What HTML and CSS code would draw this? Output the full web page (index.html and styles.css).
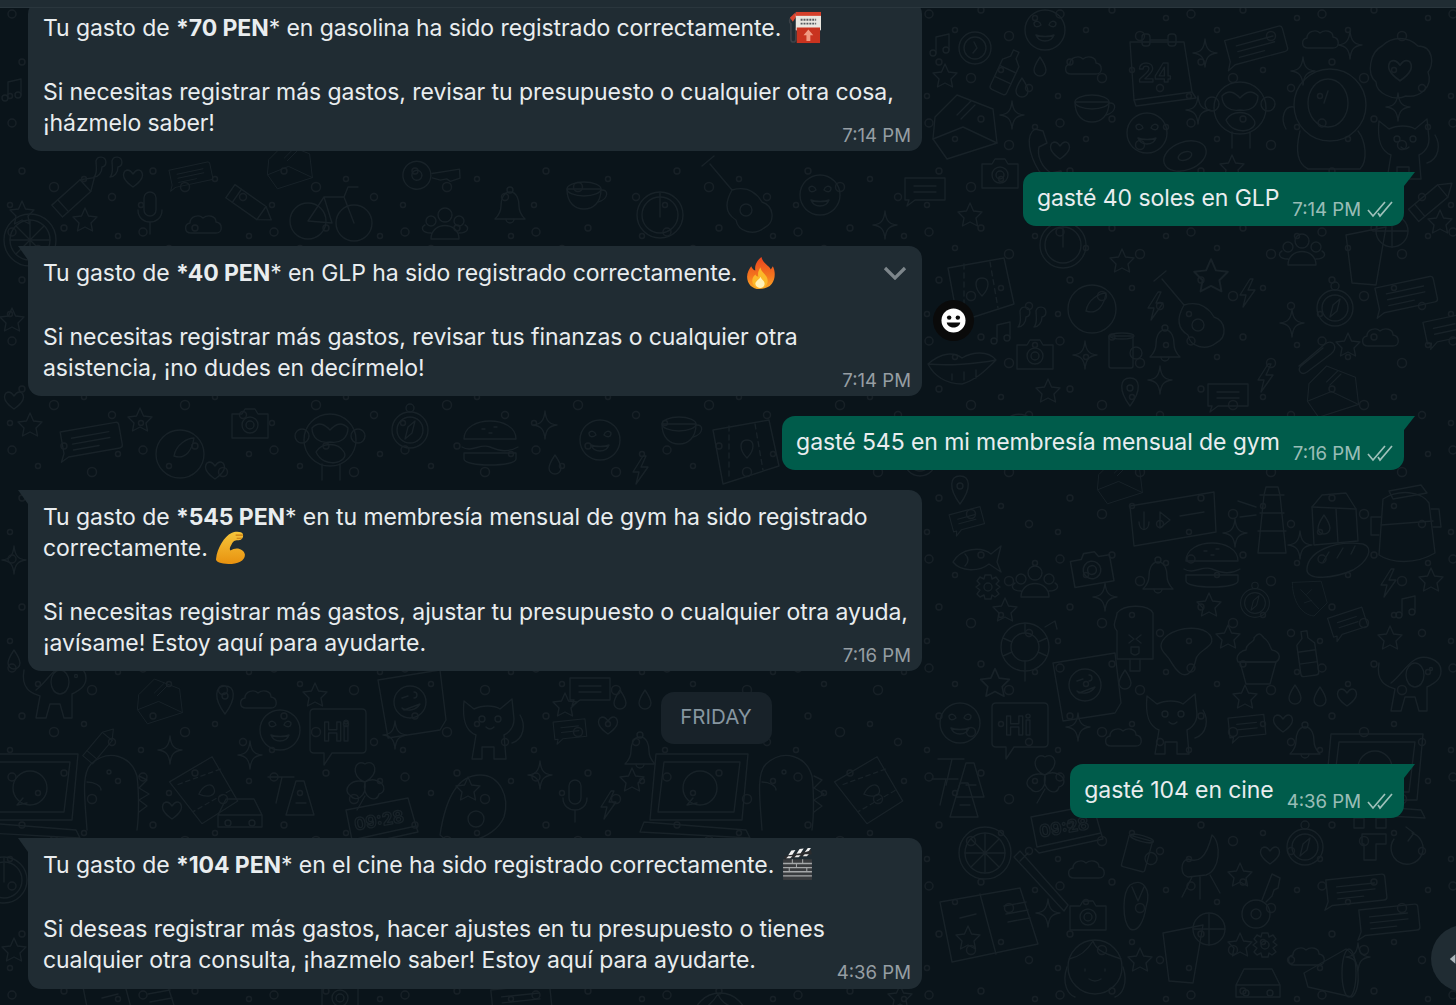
FILE: index.html
```html
<!DOCTYPE html>
<html lang="es">
<head>
<meta charset="utf-8">
<title>Chat</title>
<link rel="stylesheet" href="styles.css">
</head>
<body>
<div class="app">
  <svg class="doodles" width="1456" height="1005" viewBox="0 0 1456 1005" aria-hidden="true">
    <defs>
      <pattern id="dots" width="131" height="109" patternUnits="userSpaceOnUse">
        <circle cx="12" cy="14" r="4"/><circle cx="38" cy="30" r="2.5"/><circle cx="64" cy="10" r="3"/><circle cx="92" cy="36" r="4.5"/><circle cx="118" cy="18" r="2.5"/><circle cx="22" cy="62" r="3"/><circle cx="54" cy="78" r="4.5"/><circle cx="84" cy="70" r="2.5"/><circle cx="112" cy="88" r="3.5"/><circle cx="10" cy="96" r="2.5"/>
      </pattern>
      <path id="star" d="M0-12 3.5-4 12-3 6 3 7.5 11 0 7-7.5 11-6 3-12-3-3.5-4Z"/>
      <path id="sparkle" d="M0-14C1-4 4-1 12 0 4 1 1 4 0 14-1 4-4 1-12 0-4-1-1-4 0-14Z"/>
      <path id="heart" d="M0 9C-10 2-11-3-8-7-5-9-2-7 0-4 2-7 5-9 8-7 11-3 10 2 0 9Z"/>
      <path id="drop" d="M0-10C4-4 6-1 6 3A6 6 0 0 1-6 3C-6-1-4-4 0-10Z"/>
      <path id="cloud" d="M-14 8C-21 8-21-1-15-2-15-9-6-11-2-7 3-11 11-9 11-3 18-2 18 8 11 8Z"/>
      <path id="bolt" d="M3-14-7 2-1 2-4 14 8-3 1-3 6-14Z"/>
      <g id="note"><path d="M-6 8V-8L7-11V5"/><circle cx="-9" cy="8" r="3"/><circle cx="4" cy="5" r="3"/></g>
      <g id="chat"><path d="M-28-13H28Q31-13 31-10V10Q31 13 28 13H-24L-32 17-28 9Z"/><path d="M-18-5H20M-18 1H20M-18 7H8"/></g>
      <g id="smchat"><path d="M-20-12H20V10H-10L-18 16-16 10H-20Z"/><path d="M-11-4H11M-11 2H11"/></g>
      <g id="love"><circle r="20"/><path d="M-11-7C-9-10-5-9-4-5-8-2-11-3-11-7ZM11-7C9-10 5-9 4-5 8-2 11-3 11-7ZM-9 5C-5 7 5 7 9 5 6 13-6 13-9 5Z"/></g>
      <g id="clock"><circle r="16"/><circle r="11"/><path d="M-1-6 2 0-2 5"/></g>
      <g id="bottle"><path d="M-3-22H3V-15L9-9V20Q9 23 6 23H-6Q-9 23-9 20V-9L-3-15Z"/><path d="M-9-2H9M-9 10H9"/></g>
      <g id="envelope"><path d="M-30-8-8-30 28-16 32 18-18 34-32 14Z"/><path d="M-32 14-2 2 32 18M-8-10 6-24M-4-6 10-20"/></g>
      <g id="calendar"><path d="M-28-26H26L34 24-24 32Z"/><path d="M-24 32-22 38 38 30 34 24"/><rect x="-16" y="-34" width="8" height="12" rx="3"/><rect x="10" y="-34" width="8" height="12" rx="3"/><path d="M-8-28H10"/><text x="-20" y="14" class="dtext">24</text></g>
      <g id="camera"><path d="M-18-11H-8L-5-16H5L8-11H18V13H-18Z"/><circle r="8"/><circle r="4"/></g>
      <g id="mug"><path d="M-13-15H11V15Q11 17 9 17H-11Q-13 17-13 15Z"/><ellipse cy="-15" rx="12" ry="3"/><circle cx="14" cy="2" r="6"/></g>
      <g id="cup"><path d="M-18-6H16C16 8 8 14-1 14S-18 8-18-6Z"/><ellipse cx="-1" cy="-6" rx="17" ry="7"/><path d="M16-5C24-6 24 4 13 7"/></g>
      <g id="bell"><path d="M0-18C7-18 9-10 9-4 9 2 12 6 15 9H-15C-12 6-9 2-9-4-9-10-7-18 0-18Z"/><circle cy="-20" r="3"/><path d="M-4 9A4 4 0 0 0 4 9"/></g>
      <g id="wheel"><circle r="23"/><circle r="18"/><path d="M0-23V2"/></g>
      <g id="bike"><circle cx="-22" cy="6" r="18"/><circle cx="24" cy="8" r="18"/><path d="M-22 6-6-18 14-18 24 8M-6-18 2 8-22 6M14-18 18-28H28"/></g>
      <g id="pencil"><path d="M-24-8 14-8 26 0 14 8-24 8Z"/><path d="M-16-8V8M14-8V8"/></g>
      <g id="mic"><rect x="-6" y="-20" width="12" height="24" rx="6"/><path d="M-12-2C-12 14 12 14 12-2M0 10V22"/></g>
      <g id="compass"><circle r="18"/><circle r="13"/><circle cy="-22" r="4"/><path d="M5-9 2 3-5 9-2-3Z"/></g>
      <g id="guitar"><path d="M-30-36-8-10M-38-34-26-44M-8-10C-16 4-14 14-4 20-2 32 14 36 24 28 36 22 34 6 22 2 16-8 6-14-8-10Z"/><circle cx="6" cy="10" r="6"/></g>
      <g id="burger"><path d="M-26-6C-26-30 26-30 26-6Z"/><path d="M-28 2C-18 8-10-2 0 2S18 8 28 2M-26 8H26V14C26 22-26 22-26 14Z"/><path d="M-8-16H-5M4-18H7M-1-12H2"/></g>
      <g id="fish"><path d="M-22 4C-14-10 6-12 16-4L26-12 22 4 26 14 14 6C4 14-14 14-22 4Z"/><path d="M-10-4C-6 0-6 4-10 8"/></g>
      <g id="people"><circle cy="-10" r="7"/><circle cx="-14" cy="-4" r="5"/><circle cx="14" cy="-4" r="5"/><path d="M-14 14C-14-4 14-4 14 14ZM-14 8C-24 8-24 2-20 0M14 8C24 8 24 2 20 0"/></g>
      <g id="gear"><circle r="4"/><path d="M-3-12H3L4-8 8-10 11-6 8-3 12 0 8 3 11 7 7 10 4 8 3 12H-3L-4 8-8 10-11 7-8 3-12 0-8-3-11-6-8-10-4-8Z"/></g>
      <g id="turtle"><circle r="14"/><circle r="24"/><path d="M0-24V-14M0 14V24M-22-9-13-5M22-9 13-5M-22 9-13 5M22 9 13 5"/><path d="M20-20 30-26 32-18M0 24V34"/></g>
      <g id="pop"><path d="M-18-24C-10-34 14-32 18-24V22H-18V-6C-24-12-18-18-18-24Z"/><path d="M-5 22V34H5V22M-6-2-1 2-6 6M6-2 1 2 6 6M-4 10H4V16Q0 20-4 16Z"/></g>
      <g id="blob"><path d="M-20-18C-8-26 14-28 22-18 30-6 10-4 8 6S0 26-8 20-16 8-22 2-30-10-20-18Z"/></g>
      <g id="cupcake"><path d="M-18 2H18L12 24H-12Z"/><path d="M-20 2C-24-6-14-10-12-10-12-18-2-18-4-22 2-30 4-24 6-22 12-18 12-12 14-10 24-8 22 0 18 2Z"/></g>
      <g id="dog"><path d="M-26-20C-30 2-14 4-10 6L-14 28H-4L0 14H10L14 28H22V4C30 0 36-4 36-12 36-24 18-30 8-22 0-16-6-6-14 0"/><ellipse cx="10" cy="-8" rx="9" ry="12"/><circle cx="26" cy="-14" r="1.5"/></g>
      <g id="wink"><path d="M-32-20 30-30 36 20 30 30-22 38Z"/><circle cy="2" r="16"/><path d="M-8-2-2-4M4-8A3 3 0 1 1 4-2M-8 8C-2 12 6 10 10 4L-6 10Z"/></g>
      <g id="hi"><path d="M-24-24H24Q28-24 28-20V16Q28 20 24 20H-6L-14 32-14 20H-24Q-28 20-28 16V-20Q-28-24-24-24Z"/><text x="-15" y="8" class="dtext">Hi</text></g>
      <g id="cat"><path d="M-26-24-16-16C-8-20 4-20 10-16L22-26 24-6C24 6 14 10 14 10L16 34H4V22H-8V34H-18L-14 10C-24 6-28-4-26-24Z"/><circle cx="-8" cy="-6" r="3"/><circle cx="8" cy="-6" r="3"/><path d="M-4 2Q0 6 4 2"/><path d="M22 18C34 14 36 0 30-10"/></g>
      <g id="laptop"><path d="M-44-36H48L42 30H-50Z"/><path d="M-36-28H40L34 22H-42Z"/><path d="M-56 32 46 40 50 48-60 42Z"/><circle cy="-2" r="17"/><path d="M-7 8-13 15-3 13"/></g>
      <g id="clover"><path d="M0 2C-16-4-10-22 0-16 10-22 16-6 0 2ZM0 2C14-6 26 10 14 14 12 24-4 18 0 2ZM0 2C-14-2-24 10-14 16-10 22 2 18 0 2ZM0 16-8 30"/></g>
      <g id="letters"><path d="M-12 20-2-14H6L16 20ZM-2 8H8M-30-18H-4M-16-18-22 8"/></g>
      <g id="digit"><path d="M-34-10 28-22 36 6-28 20Z"/><path d="M-30 22-26 26 38 12 36 6"/><text x="-26" y="6" class="dtext dsmall" transform="rotate(-10)">09:28</text></g>
      <g id="citrus"><circle r="26"/><circle r="20"/><path d="M0-20V20M-20 0H20M-14-14 14 14M-14 14 14-14"/></g>
      <g id="chair"><path d="M-14-8C-4-4 4-8 10-32 20-24 18 4 4 8L-14 10C-22 8-22-6-14-8ZM-10 10-20 30M8 8 18 26M-2 10V32"/></g>
      <g id="puzzle"><path d="M-18-22H-8V-12H-18ZM4-22H14V-12H4ZM-10-6H14V4H4V20H-8V4H-10Z"/></g>
      <g id="refresh"><path d="M-14-8A16 16 0 1 0 4-14M-2-20 6-14 0-6"/></g>
      <g id="brush"><path d="M-28-26-22-32 26 22 22 28ZM-22-22-14-30"/></g>
      <g id="book"><path d="M-48-18 32-32 50 24-36 42Z"/><path d="M-8-26 8 34M-28-2-12-6M16-14 38-18M18-6 40-10M20 2 42-2"/><use href="#star" x="-20" y="18"/></g>
      <g id="flip"><path d="M-8-22C4-30 14-18 8 0 6 14 0 26-8 22-16 14-16-14-8-22ZM-6-20 0-6 6-20"/></g>
      <g id="keyd"><circle cx="-2" cy="14" r="14"/><circle cx="-2" cy="14" r="5"/><path d="M4 0 14-26 22-22 20-12 16-10 14-4 8 2"/></g>
      <g id="girl"><circle r="27"/><path d="M-26-8C-16-10-8-16-2-26 2-14 16-12 26-8M-10 2V4M10 2V4M-6 12Q0 16 6 12"/><path d="M-28 0C-34 18-26 28-20 30M28 0C34 18 26 28 20 30"/></g>
      <g id="drink"><path d="M-22-20 18-28 8 30-16 28Z"/><circle cx="24" cy="-24" r="16"/><path d="M24-40V-8M8-24H40"/></g>
      <g id="megaphone"><path d="M-28-4 14-28C28-20 30 12 20 20L-24 10Z"/><ellipse cx="17" cy="-4" rx="7" ry="24"/></g>
      <g id="car"><path d="M-22 12V0L-14-16H14L22 0V12ZM-22 0H22"/><circle cx="-12" cy="8" r="3"/><circle cx="12" cy="8" r="3"/></g>
      <g id="audio"><path d="M-42-14 42-28 44 12-38 26Z"/><path d="M-28-8V8M-33 2C-33 12-23 12-23 2M-12-8-12 8-2 0ZM8-4 32-8"/></g>
      <g id="tower"><path d="M-8-28H8L14 30H-14ZM-12-28H12M-12-10H12M-14 8H14"/><path d="M-8-28-6-36H6L8-28"/><path d="M-16-16-34-22M-16-8-32-6"/></g>
      <g id="milk"><path d="M-20-10-10-22 14-24 24-8 26 24-18 28Z"/><path d="M-20-10 24-8M4-8 6 26"/><use href="#drop" x="-8" y="8"/></g>
      <g id="pack"><path d="M-22-28C-6-38 16-36 24-24L30 26C10 38-14 36-26 28Z"/><path d="M-24-2 28-6M-26 8H-34V-10H-24M28 0H36L34-18H26"/><path d="M-16-36 16-42 22-34-12-28Z"/></g>
      <g id="bread"><path d="M-30 8C-28-8-4-20 26-16 38-12 30 2 16 10-2 18-32 22-30 8Z"/><path d="M-14 2-8-8M0-2 6-12M14-6 18-14"/></g>
      <g id="phone"><path d="M-8-26C-18-20-14 0-4 16 4 26 14 30 22 26L18 16 8 18C-2 12-6 0-4-8L4-12 0-24Z"/></g>
      <g id="monkey"><circle r="26"/><circle cx="-28" cy="-4" r="7"/><circle cx="28" cy="-4" r="7"/><path d="M-18-12C-10-20-4-14 0-10 4-14 10-20 18-12 18-2 10 4 0 2-10 4-18-2-18-12ZM-14 12C-8 2 8 2 14 12S-6 30-14 12ZM-8 24V40M10 24V40"/></g>
      <g id="astro"><circle r="36"/><ellipse cx="-2" cy="-2" rx="20" ry="24"/><path d="M-6-2-2-14M-36 2C-46 0-50 14-44 24M-30 26C-36 50-30 60-22 64H30C38 56 36 36 28 26"/></g>
      <g id="flower"><path d="M-18-24C-8-34 8-34 18-24 34-24 34-4 28 2 34 18 18 28 6 26-8 32-24 22-24 12-34 4-30-18-18-24Z"/><use href="#heart" transform="scale(1.2)"/></g>
      <g id="donut"><ellipse rx="22" ry="14" transform="rotate(-20)"/><ellipse rx="7" ry="4" transform="rotate(-20)"/></g>
      <g id="map"><path d="M-32-20 24-30 34 16-22 34Z"/><path d="M-16-24V28M10-26 18 20" stroke-dasharray="5 4"/><path d="M2-10C-6-10-6 0 2 8 10 0 10-10 2-10Z"/></g>
      <g id="lips"><path d="M-34-6C-20-18-8-18 0-12 10-18 26-20 34-10 24 0 14 10 0 14-16 14-28 6-34-6ZM-34-6C-14-4 14-6 34-10M-10 4V10M2 2V10M14 0V8"/></g>
      <g id="quote"><path d="M-12-4A5 5 0 1 1-6 2C-6 8-10 12-14 12-10 8-12 2-12-4ZM4-4A5 5 0 1 1 10 2C10 8 6 12 2 12 6 8 4 2 4-4Z"/></g>
      <g id="leaf"><path d="M-26-26 22-28 32 8 10 30C-12 28-26 4-26-26ZM-12-14 18 18M-2-6 6-14M6 4-6 8"/></g>
      <g id="bird"><circle cy="4" r="24"/><path d="M-6 6C-4-6 8-12 14-12 12 0 6 10-6 6Z"/></g>
      <g id="dino"><path d="M-28 50C-30 20-34-6-24-16-6-32 16-24 22-4 24 12 24 36 22 50M24-4 32 0 24 8 34 14 24 20 32 26 24 32"/><circle cx="-6" cy="-8" r="2"/><path d="M-28 2C-20 2-14 6-14 10"/></g>
      <g id="clip"><path d="M-16 10 10-12C18-18 24-8 16-2L-8 16C-14 20-18 14-14 10L8-8"/></g>
      <g id="pin"><path d="M0-14C-10-14-12-2 0 14 12-2 10-14 0-14Z"/><circle cy="-4" r="3"/></g>
      <g id="controller"><path d="M-30 30C-24-10-10-30 10-30 30-30 40-8 34 12 24 36-16 44-30 30Z"/><use href="#star" x="-2" y="-16"/><circle cx="6" cy="14" r="8"/></g>
    </defs>
    <rect width="1456" height="1005" fill="url(#dots)"/>
    <g class="doodle">
      <use href="#love" x="1045" y="30"/><use href="#note" x="942" y="45"/><use href="#clock" x="975" y="48"/>
      <use href="#bottle" transform="translate(1007 71) rotate(25)"/><use href="#star" x="945" y="76"/>
      <use href="#calendar" x="1158" y="68"/><use href="#chat" transform="translate(1255 46) rotate(-15)"/>
      <use href="#sparkle" x="1205" y="53"/><use href="#sparkle" x="1350" y="45"/><use href="#sparkle" x="1303" y="71"/>
      <use href="#flower" x="1400" y="70"/><use href="#envelope" x="965" y="125"/><use href="#sparkle" x="1012" y="115"/>
      <use href="#cloud" x="1085" y="66"/><use href="#cloud" x="1322" y="40"/><use href="#cup" x="1093" y="108"/>
      <use href="#love" x="1147" y="133"/><use href="#monkey" x="1240" y="108"/><use href="#astro" x="1330" y="105"/>
      <use href="#phone" x="1043" y="155"/><use href="#heart" x="1060" y="150"/><use href="#donut" x="1185" y="156"/>
      <use href="#sparkle" x="1198" y="110"/><use href="#sparkle" x="1398" y="107"/><use href="#drop" x="1040" y="67"/><use href="#drop" x="1022" y="88"/>
      <use href="#cat" x="1405" y="145"/><use href="#star" x="1232" y="167"/>
      <use href="#wheel" x="1063" y="245"/><use href="#star" x="1122" y="261"/><use href="#star" transform="translate(1211 276) scale(1.4)"/>
      <use href="#guitar" x="1192" y="315"/><use href="#bolt" x="1247" y="293"/><use href="#bolt" x="1155" y="306"/><use href="#people" x="1302" y="251"/>
      <use href="#drink" x="1368" y="255"/><use href="#chat" transform="translate(1405 295) rotate(-12)"/><use href="#compass" x="1335" y="308"/>
      <use href="#sparkle" x="1292" y="323"/><use href="#map" x="980" y="288"/><use href="#quote" x="1032" y="315"/>
      <use href="#bird" x="1092" y="305"/><use href="#camera" x="1035" y="356"/><use href="#mug" x="1122" y="351"/>
      <use href="#bell" x="1165" y="348"/><use href="#sparkle" x="1085" y="355"/><use href="#clip" x="1315" y="356"/>
      <use href="#cloud" x="1382" y="338"/><use href="#star" x="1348" y="345"/><use href="#lips" x="962" y="370"/>
      <use href="#envelope" transform="translate(1333 390) scale(.8)"/><use href="#smchat" x="1228" y="396"/><use href="#sparkle" x="1160" y="380"/>
      <use href="#star" x="1048" y="391"/><use href="#bolt" x="1265" y="378"/><use href="#pin" x="1130" y="392"/><use href="#pencil" transform="translate(1432 200) rotate(-40)"/>
      <use href="#star" x="1440" y="222"/><use href="#smchat" transform="translate(1445 330) rotate(-12)"/><use href="#note" x="1003" y="333"/>
      <use href="#smchat" transform="translate(967 520) rotate(-15) scale(.8)"/><use href="#audio" x="1172" y="520"/><use href="#tower" x="1272" y="523"/>
      <use href="#milk" x="1332" y="517"/><use href="#pack" x="1405" y="527"/><use href="#fish" x="975" y="558"/><use href="#camera" transform="translate(1092 570) rotate(-10) scale(1.1)"/>
      <use href="#bell" x="1158" y="580"/><use href="#burger" x="1212" y="567"/><use href="#bread" x="1337" y="560"/><use href="#sparkle" x="1235" y="533"/>
      <use href="#sparkle" x="1300" y="545"/><use href="#people" x="1035" y="583"/><use href="#gear" x="988" y="587"/><use href="#sparkle" x="1105" y="597"/>
      <use href="#leaf" transform="translate(1308 598) scale(.6)"/><use href="#compass" transform="translate(1255 603) scale(.8)"/><use href="#bolt" x="1388" y="583"/><use href="#note" x="1408" y="607"/>
      <use href="#star" x="1005" y="610"/><use href="#star" x="1209" y="605"/><use href="#star" x="1431" y="580"/><use href="#blob" x="1188" y="653"/>
      <use href="#turtle" x="1025" y="647"/><use href="#pop" x="1135" y="637"/><use href="#cupcake" x="1258" y="660"/><use href="#bottle" transform="translate(1307 653) rotate(-8)"/>
      <use href="#smchat" transform="translate(1348 623) rotate(-18) scale(.9)"/><use href="#dog" x="1405" y="683"/><use href="#star" x="1390" y="638"/><use href="#star" x="1228" y="637"/>
      <use href="#wink" x="1085" y="683"/><use href="#heart" x="1347" y="697"/><use href="#star" transform="translate(995 683) scale(1.2)"/><use href="#drop" x="1125" y="680"/><use href="#drop" x="1295" y="695"/><use href="#drop" x="1320" y="697"/>
      <use href="#love" x="960" y="723"/><use href="#hi" x="1020" y="727"/><use href="#cat" x="1173" y="720"/><use href="#smchat" transform="translate(1247 727) rotate(-6) scale(.9)"/><use href="#heart" x="1283" y="723"/><use href="#star" x="1245" y="697"/>
      <use href="#laptop" x="1375" y="770"/><use href="#sparkle" x="1078" y="727"/><use href="#clover" x="1045" y="773"/><use href="#letters" x="968" y="777"/><use href="#bell" x="1305" y="745"/><use href="#cloud" x="1125" y="738"/>
      <use href="#digit" x="1065" y="827"/><use href="#citrus" x="985" y="853"/><use href="#mug" transform="translate(1138 853) rotate(15)"/><use href="#chair" x="1202" y="867"/>
      <use href="#compass" x="1305" y="847"/><use href="#puzzle" x="1372" y="840"/><use href="#refresh" x="1408" y="847"/><use href="#cloud" x="1088" y="870"/>
      <use href="#book" x="988" y="920"/><use href="#brush" x="1042" y="883"/><use href="#camera" x="1088" y="917"/><use href="#flip" x="1138" y="907"/><use href="#keyd" x="1258" y="900"/>
      <use href="#chat" transform="translate(1355 890) rotate(-6)"/><use href="#chat" transform="translate(1388 920) rotate(-6)"/><use href="#girl" x="1095" y="967"/><use href="#drink" x="1185" y="953"/>
      <use href="#gear" x="1265" y="945"/><use href="#cloud" x="1308" y="957"/><use href="#sparkle" x="1358" y="957"/><use href="#megaphone" x="1332" y="977"/><use href="#car" x="1258" y="985"/><use href="#sparkle" x="1048" y="913"/><use href="#star" x="1240" y="875"/><use href="#star" x="1140" y="960"/><use href="#heart" x="1270" y="855"/><use href="#star" x="1240" y="945"/>

      <use href="#pencil" transform="translate(75 195) rotate(-42)"/><use href="#quote" x="108" y="165"/><use href="#heart" x="133" y="178"/><use href="#mic" x="150" y="212"/><use href="#star" x="85" y="220"/><use href="#star" x="22" y="213"/>
      <use href="#cloud" x="205" y="225"/><use href="#pencil" transform="translate(250 205) rotate(35)"/><use href="#bike" x="330" y="215"/><use href="#chat" transform="translate(190 175) rotate(-12) scale(.7)"/><use href="#people" x="445" y="225"/><use href="#keyd" transform="translate(430 170) rotate(60)"/><use href="#citrus" x="30" y="240"/>
      <use href="#envelope" transform="translate(290 165) scale(.7)"/><use href="#bell" x="510" y="210"/><use href="#cup" x="585" y="195"/><use href="#wheel" x="660" y="215"/><use href="#guitar" x="740" y="200"/><use href="#love" x="820" y="195"/><use href="#sparkle" x="885" y="225"/><use href="#smchat" x="925" y="190"/><use href="#star" x="970" y="215"/><use href="#camera" x="1000" y="175"/>

      <use href="#chat" transform="translate(90 440) rotate(-10)"/><use href="#bird" x="180" y="450"/><use href="#camera" x="250" y="425"/><use href="#monkey" x="330" y="440"/><use href="#compass" x="410" y="430"/><use href="#burger" x="490" y="445"/><use href="#sparkle" x="545" y="425"/><use href="#love" x="600" y="440"/><use href="#cup" x="680" y="430"/><use href="#map" x="745" y="450"/><use href="#star" x="30" y="425"/><use href="#star" x="140" y="420"/><use href="#heart" x="215" y="470"/><use href="#drop" x="555" y="465"/><use href="#bolt" x="640" y="470"/>
      <use href="#cloud" x="860" y="435"/><use href="#clock" x="920" y="460"/><use href="#pin" x="960" y="490"/><use href="#dog" x="1000" y="440"/><use href="#envelope" transform="translate(1120 480) scale(.7)"/>

      <use href="#dog" x="50" y="690"/><use href="#envelope" transform="translate(160 700) scale(.7)"/><use href="#pin" x="225" y="700"/><use href="#cloud" x="260" y="700"/><use href="#star" x="315" y="695"/><use href="#wink" x="410" y="700"/><use href="#star" x="565" y="705"/><use href="#smchat" x="590" y="690"/>
      <use href="#pencil" transform="translate(100 745) rotate(-50) scale(.8)"/><use href="#love" x="280" y="730"/><use href="#hi" x="338" y="733"/><use href="#cat" x="490" y="725"/><use href="#smchat" transform="translate(570 730) rotate(-6) scale(.8)"/><use href="#heart" x="608" y="725"/>
      <use href="#bell" x="640" y="755"/><use href="#sparkle" x="395" y="735"/><use href="#sparkle" x="170" y="750"/><use href="#sparkle" x="250" y="755"/><use href="#drop" x="620" y="700"/><use href="#drop" x="645" y="700"/>
      <use href="#laptop" x="30" y="790"/><use href="#laptop" x="700" y="790"/><use href="#dino" x="115" y="780"/><use href="#map" transform="translate(205 790) rotate(70) scale(.9)"/><use href="#letters" x="298" y="795"/><use href="#clover" x="365" y="780"/>
      <use href="#controller" x="470" y="805"/><use href="#mic" x="575" y="800"/><use href="#bolt" x="608" y="805"/><use href="#star" x="632" y="780"/><use href="#sparkle" x="540" y="775"/><use href="#heart" x="172" y="810"/><use href="#car" x="240" y="815"/><use href="#digit" x="380" y="820"/><use href="#dino" x="790" y="780"/><use href="#map" transform="translate(870 790) rotate(70) scale(.9)"/><use href="#letters" x="962" y="797"/>

      <use href="#star" x="12" y="320"/><use href="#sparkle" x="14" y="560"/><use href="#note" x="14" y="90"/><use href="#heart" x="14" y="400"/><use href="#drop" x="14" y="660"/><use href="#wheel" x="4" y="880"/><use href="#star" x="14" y="950"/>
      <use href="#book" x="130" y="1000"/><use href="#camera" x="340" y="998"/><use href="#chat" transform="translate(520 1000) rotate(-6)"/><use href="#girl" x="720" y="1020"/><use href="#star" x="900" y="997"/>
    </g>
  </svg>

  <header class="topbar"></header>

  <main class="chat">
    <div class="bubble in first">
      <p class="para">Tu gasto de <strong>*70 PEN</strong>* en gasolina ha sido registrado correctamente. <svg class="emoji" viewBox="0 0 34 34"><path d="M4 6C1 8 1 12 3 13V29C3 33 8 33 8 29V18" fill="none" stroke="#3c4147" stroke-width="1.6"/><path d="M2 7 7 2 9 5 5 11Z" fill="#d9442e"/><rect x="8" y="1" width="26" height="19" rx="1" fill="#e9e6e0"/><rect x="8" y="1" width="26" height="4" fill="#d5402b"/><path d="M13 9H29M13 13H29" stroke="#55595e" stroke-width="2" stroke-dasharray="2 1"/><rect x="9" y="17" width="24" height="16" fill="#c9331f"/><path d="M21 19 26 25H23V31H19V25H16Z" fill="#f19a82"/></svg></p>
      <p class="para">Si necesitas registrar más gastos, revisar tu presupuesto o cualquier otra cosa,<br>¡házmelo saber!</p>
      <span class="time">7:14 PM</span>
    </div>

    <div class="bubble out tail-out">
      <span class="msg">gasté 40 soles en GLP</span>
      <span class="meta"><span class="otime">7:14 PM</span><svg class="ticks" viewBox="0 0 26 18"><path d="M1 10 6 16 18 2M11 13 13 16 25 2" fill="none" stroke="currentColor" stroke-width="1.7"/></svg></span>
    </div>

    <div class="bubble in tail-in">
      <p class="para">Tu gasto de <strong>*40 PEN</strong>* en GLP ha sido registrado correctamente. <svg class="emoji" viewBox="0 0 30 32"><defs><linearGradient id="fa" x1="0" y1="0" x2="0" y2="1"><stop offset="0" stop-color="#e8431f"/><stop offset=".6" stop-color="#f4761e"/><stop offset="1" stop-color="#f9a825"/></linearGradient></defs><path d="M16 1C17 7 23 9 25 13L27 10C30 16 29 23 26 27 23 31 18 32 14 32 7 32 2 27 2 20 2 16 4 13 6 10 7 12 8 14 10 14 9 9 12 4 16 1Z" fill="url(#fa)"/><path d="M15 11C15 16 22 18 22 24 22 29 18 31 15 31 10 31 7 28 7 24 7 21 9 19 10 18 11 20 12 20 13 20 12 17 13 14 15 11Z" fill="#fbb829"/><path d="M15 20C16 23 19 24 19 27 19 30 16 31 14.500 31 12 31 10 29 10 27 10 24 14 23 15 20Z" fill="#fff1b8"/></svg></p>
      <p class="para">Si necesitas registrar más gastos, revisar tus finanzas o cualquier otra<br>asistencia, ¡no dudes en decírmelo!</p>
      <span class="time">7:14 PM</span>
      <svg class="chevron" viewBox="0 0 24 14"><path d="M2 2 12 12 22 2" fill="none" stroke="currentColor" stroke-width="3.200"/></svg>
      <span class="react"><svg viewBox="0 0 26 26"><circle cx="13" cy="13" r="12.500" fill="#fff"/><circle cx="8.500" cy="10" r="2.300" fill="#0a0a0a"/><circle cx="17.500" cy="10" r="2.300" fill="#0a0a0a"/><path d="M6 15H20C19 22 7 22 6 15Z" fill="#0a0a0a"/></svg></span>
    </div>

    <div class="bubble out tail-out">
      <span class="msg">gasté 545 en mi membresía mensual de gym</span>
      <span class="meta"><span class="otime">7:16 PM</span><svg class="ticks" viewBox="0 0 26 18"><path d="M1 10 6 16 18 2M11 13 13 16 25 2" fill="none" stroke="currentColor" stroke-width="1.7"/></svg></span>
    </div>

    <div class="bubble in tail-in">
      <p class="para">Tu gasto de <strong>*545 PEN</strong>* en tu membresía mensual de gym ha sido registrado<br>correctamente. <svg class="emoji" viewBox="0 0 30 32"><defs><linearGradient id="ma" x1="0" y1="0" x2="0" y2="1"><stop offset="0" stop-color="#f7c63b"/><stop offset="1" stop-color="#e8920f"/></linearGradient></defs><path d="M16 2C19 0 26 0 27 3 28 6 26 9 23 9 20 9 18 9 16 13 14 16 14 18 15 19 20 15 28 17 29 23 29 29 22 32 13 32 6 32 0 30 1 27 2 17 9 5 16 2Z" fill="url(#ma)"/><path d="M20 4H27M21 7H26" stroke="#c97a10" stroke-width="1"/></svg></p>
      <p class="para">Si necesitas registrar más gastos, ajustar tu presupuesto o cualquier otra ayuda,<br>¡avísame! Estoy aquí para ayudarte.</p>
      <span class="time">7:16 PM</span>
    </div>

    <div class="date">FRIDAY</div>

    <div class="bubble out tail-out">
      <span class="msg">gasté 104 en cine</span>
      <span class="meta"><span class="otime">4:36 PM</span><svg class="ticks" viewBox="0 0 26 18"><path d="M1 10 6 16 18 2M11 13 13 16 25 2" fill="none" stroke="currentColor" stroke-width="1.7"/></svg></span>
    </div>

    <div class="bubble in tail-in last">
      <p class="para">Tu gasto de <strong>*104 PEN</strong>* en el cine ha sido registrado correctamente. <svg class="emoji" viewBox="0 0 30 32"><rect x="1" y="11" width="28" height="20" fill="#3a3c3f"/><path d="M1 15H29M1 19H29M1 23H29M1 27H29" stroke="#a5a7a9" stroke-width="1.300"/><path d="M10 11V15M20 11V15M14 15V19M24 19V23M7 19V23" stroke="#a5a7a9" stroke-width="1"/><path d="M2 8 28 2 29 6 3 11Z" fill="#2b2c2e"/><path d="M6 7 9 2.500 13 2 10 6.500ZM14 5.500 17 1 21 .500 18 5ZM22 4 25 0 28 0 26 3Z" fill="#f2f2f2"/><path d="M4 10H8L10 8H6ZM12 9H16L18 7H14ZM20 8H24L26 6H22Z" fill="#e8e8e8"/></svg></p>
      <p class="para">Si deseas registrar más gastos, hacer ajustes en tu presupuesto o tienes<br>cualquier otra consulta, ¡hazmelo saber! Estoy aquí para ayudarte.</p>
      <span class="time">4:36 PM</span>
    </div>
  </main>

  <button class="scroll" type="button" aria-label="Bajar"><svg viewBox="0 0 10 14"><path d="M8 1 1 7 8 13Z" fill="currentColor"/></svg></button>
</div>
</body>
</html>
```
FILE: styles.css
```css
* { box-sizing: border-box; }
html, body { margin: 0; height: 100%; }
body {
  background: #0b141a;
  color: #e9edef;
  font-family: Inter, "Liberation Sans", sans-serif;
  overflow: hidden;
}
.app {
  position: relative;
  height: 1005px;
  display: flex;
  flex-direction: column;
  overflow: hidden;
  background: #0a141a;
}
.doodles { position: absolute; top: 0; left: 0; filter: blur(.4px); }
.doodle { fill: none; stroke: #182228; stroke-width: 1.4; stroke-linejoin: round; stroke-linecap: round; }
#dots circle { fill: none; stroke: #172026; stroke-width: 1.4; }
.dtext { font-family: Inter, sans-serif; font-size: 26px; font-weight: 700; }
.dsmall { font-size: 17px; }
.topbar {
  position: relative;
  z-index: 2;
  flex: none;
  height: 8px;
  background: #202c33;
  border-bottom: 1px solid #2a363d;
}
.chat {
  position: relative;
  flex: 1;
  display: flex;
  flex-direction: column;
  gap: 20px;
  padding: 0 52px 0 28px;
}
.bubble { position: relative; font-size: 23px; letter-spacing: -.08px; line-height: 31px; }
.in {
  display: flex;
  flex-direction: column;
  flex: none;
  width: 894px;
  padding: 12px 11px 4px 15px;
  background: #202c33;
  border-radius: 0 13px 13px 13px;
}
.first { height: 150px; margin: -7px 0 1px; border-radius: 13px; }
.last { height: 151px; }
.para { margin: 0 0 33px; white-space: nowrap; }
.para:nth-of-type(2) { margin-bottom: 0; }
.para strong { font-weight: 700; }
.time {
  align-self: flex-end;
  margin-top: -16px;
  font-size: 18.6px;
  letter-spacing: 0;
  line-height: 24px;
  color: #969ea3;
}
.out {
  display: flex;
  align-items: flex-end;
  align-self: flex-end;
  gap: 13px;
  height: 54px;
  padding: 11px 11px 5px 14px;
  background: #005c4b;
  border-radius: 13px 0 13px 13px;
}
.msg { align-self: flex-start; white-space: nowrap; }
.meta {
  display: flex;
  align-items: center;
  gap: 6px;
  line-height: 24px;
  font-size: 18.6px;
  letter-spacing: 0;
  color: rgba(255, 255, 255, .62);
}
.otime { white-space: nowrap; }
.ticks { width: 26px; height: 18px; }
.tail-in::before {
  content: "";
  position: absolute;
  top: 0;
  left: -10px;
  width: 10px;
  height: 14px;
  background: #202c33;
  clip-path: polygon(0 0, 100% 0, 100% 100%);
}
.tail-out::after {
  content: "";
  position: absolute;
  top: 0;
  right: -11px;
  width: 11px;
  height: 14px;
  background: #005c4b;
  clip-path: polygon(0 0, 100% 0, 0 100%);
}
.emoji {
  display: inline-block;
  width: 33px;
  height: 33px;
  margin: -8px 0 -8px 0;
  vertical-align: 0;
}
.chevron {
  position: absolute;
  top: 20px;
  right: 15px;
  width: 24px;
  height: 14px;
  color: #7d868b;
}
.react {
  position: absolute;
  top: 54px;
  left: 100%;
  margin-left: 11px;
  display: flex;
  align-items: center;
  justify-content: center;
  width: 41px;
  height: 41px;
  border-radius: 50%;
  background: #0a0a0a;
}
.react svg { width: 25px; height: 25px; }
.date {
  align-self: center;
  width: 111px;
  height: 52px;
  margin-top: 1px;
  padding-bottom: 3px;
  display: flex;
  align-items: center;
  justify-content: center;
  border-radius: 13px;
  background: #182229;
  color: #8696a0;
  font-size: 20.5px;
}
.scroll {
  position: absolute;
  top: 925px;
  left: 1431px;
  width: 67px;
  height: 67px;
  padding: 0 0 0 18px;
  display: flex;
  align-items: center;
  border: 0;
  border-radius: 50%;
  background: #202c33;
  color: #aab4ba;
}
.scroll svg { width: 8px; height: 12px; }
```
